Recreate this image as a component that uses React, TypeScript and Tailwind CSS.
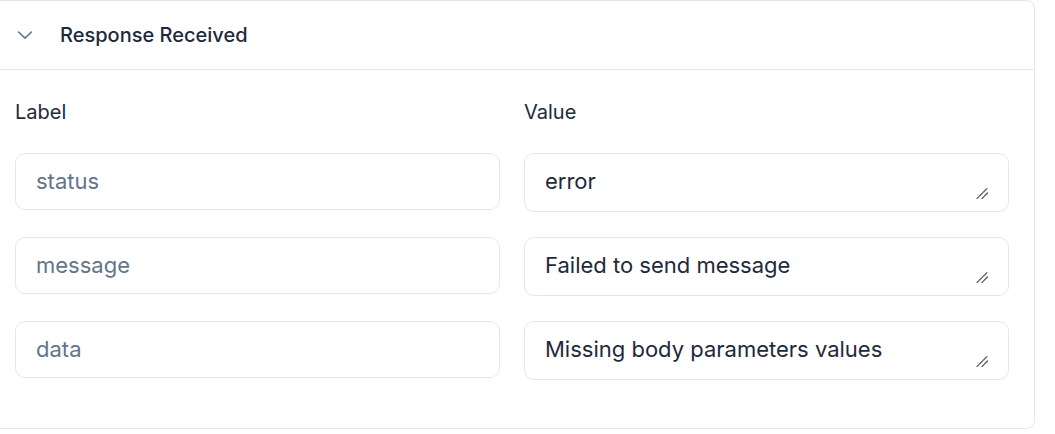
import React from "react";

function Grip() {
  return (
    <svg
      className="pointer-events-none absolute bottom-[13px] right-[21px]"
      width="12"
      height="12"
      viewBox="0 0 12 12"
      fill="none"
      stroke="#4b5563"
      strokeWidth="1.2"
      strokeLinecap="round"
    >
      <path d="M1 11.5 L11.5 1" strokeDasharray="2 1" />
      <path d="M6 11.5 L11.5 6" strokeDasharray="2 1" />
    </svg>
  );
}

const rows = [
  { label: "status", value: "error" },
  { label: "message", value: "Failed to send message" },
  { label: "data", value: "Missing body parameters values" },
];

export default function App() {
  return (
    <div
      className="h-[434px] w-[1055px] overflow-hidden bg-white text-[#1e293b]"
      style={{ fontFamily: "Inter, 'Noto Sans', sans-serif" }}
    >
      <div className="-ml-[10px] w-[1045px] rounded-lg border border-[#e5e7eb] bg-white">
        <div className="flex h-[69px] items-center gap-[27px] border-b border-[#e5e7eb] pl-[26px]">
          <svg
            width="16"
            height="10"
            viewBox="0 0 16 10"
            fill="none"
            stroke="#64748b"
            strokeWidth="1.6"
            strokeLinecap="round"
            strokeLinejoin="round"
          >
            <path d="M1.5 2 L8 8.2 L14.5 2" />
          </svg>
          <span className="text-[20px] font-medium text-[#1e293b]">Response Received</span>
        </div>
        <div className="pb-12 pl-6 pr-[25px] pt-[28px]">
          <div className="grid grid-cols-2 gap-x-6">
            <div className="h-7 text-[20px] leading-7">Label</div>
            <div className="h-7 text-[20px] leading-7">Value</div>
          </div>
          <div className="mt-[27px] flex flex-col gap-[25px]">
            {rows.map((r) => (
              <div key={r.label} className="grid grid-cols-2 gap-x-6">
                <div>
                  <input
                    placeholder={r.label}
                    className="h-[57px] w-full rounded-[10px] border border-[#e5e7eb] bg-white px-5 pb-[2px] text-[22px] text-[#1e293b] outline-none placeholder:text-[#64748b]"
                  />
                </div>
                <div className="relative">
                  <textarea
                    defaultValue={r.value}
                    rows={1}
                    className="block h-[59px] w-full resize-none rounded-[10px] border border-[#e5e7eb] bg-white px-5 pb-[14px] pt-[12px] text-[22px] leading-[30px] text-[#1e293b] outline-none"
                  />
                  <Grip />
                </div>
              </div>
            ))}
          </div>
        </div>
      </div>
    </div>
  );
}
